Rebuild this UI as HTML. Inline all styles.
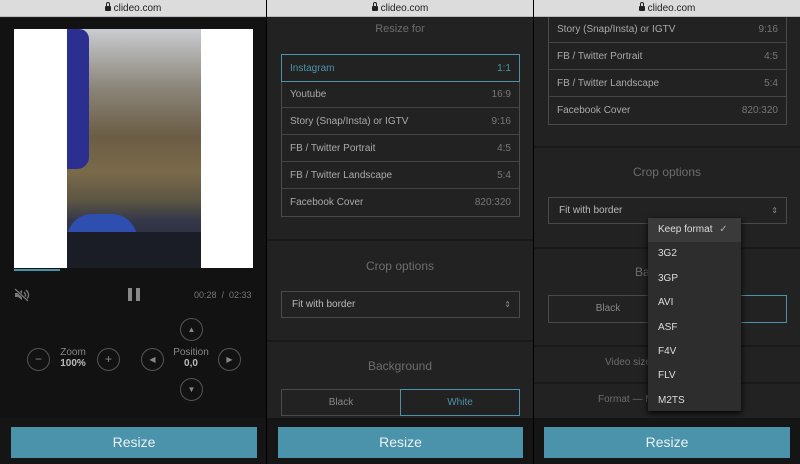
<!DOCTYPE html><html><head><style>
*{margin:0;padding:0;box-sizing:border-box}
body{width:800px;height:464px;background:#1e1e1e;font-family:"Liberation Sans",sans-serif;position:relative;overflow:hidden;color:#aaa}
.a{position:absolute}
.bar{top:0;height:17px;background:#dcdcdc;border-bottom:1px solid #bbb;font-size:10px;color:#222;text-align:center;line-height:17px}
.lock{display:inline-block;width:6px;height:5px;background:#222;margin-right:3px;border-radius:1px;position:relative}
.lock:before{content:"";position:absolute;left:1px;top:-4px;width:2px;height:3px;border:1px solid #222;border-bottom:none;border-radius:2px 2px 0 0}
.p{top:18px;height:446px;background:#222}
.foot{height:46px;top:418px;background:#151515}
.btn{background:#4b93aa;color:#e8f2f5;font-size:14px;text-align:center;line-height:31px;height:31px;top:427px}
.sep{height:2px;background:#191919}
.lbl{font-size:11px;color:#6d6d6d;text-align:center}
.list{border:1px solid #4a4a4a}
.row{height:27px;border-bottom:1px solid #444;font-size:10px;color:#aaa;display:flex;justify-content:space-between;align-items:center;padding:0 8px}
.row span:last-child{color:#777}
.sel{border:1px solid #4a4a4a;height:27px;font-size:10px;color:#bbb;padding:0 10px;line-height:25px}
.sel:after{content:"⇕";position:absolute;right:8px;font-size:8px;color:#888}
.circ{width:23px;height:23px;border:1px solid #555;border-radius:50%;color:#888;font-size:12px;text-align:center;line-height:21px}
.dd div{height:24.4px;font-size:10px;color:#ddd;padding-left:10px;line-height:24px}
</style></head><body>
<!-- panel 1 -->
<div class="a p" style="left:0;width:266px;background:#121212"></div>
<div class="a" style="left:14px;top:29px;width:239px;height:239px;background:#fff"></div>
<div class="a" style="left:67px;top:29px;width:134px;height:239px;background:linear-gradient(180deg,#c9ccd0 0%,#8a8478 25%,#6b5d45 45%,#7a6a4a 60%,#5b5543 72%,#34384a 80%,#1d2030 100%)"></div>
<div class="a" style="left:67px;top:29px;width:22px;height:140px;background:#2b2f8f;border-radius:0 10px 12px 0"></div>
<div class="a" style="left:67px;top:214px;width:70px;height:25px;background:#2e4fb0;border-radius:30px 30px 0 0"></div>
<div class="a" style="left:67px;top:232px;width:134px;height:36px;background:#1a1c26"></div>
<div class="a" style="left:14px;top:269px;width:46px;height:2px;background:#4b93aa"></div>
<svg class="a" style="left:14px;top:288px" width="16" height="14" viewBox="0 0 16 14"><path d="M1 5h3l4-3v10l-4-3H1z" fill="#777"/><path d="M10 4q3 3 0 6M12 2q5 5 0 10" stroke="#777" fill="none" stroke-width="1.3"/><path d="M1 1l13 12" stroke="#121212" stroke-width="2.5"/><path d="M1 1l13 12" stroke="#777" stroke-width="1.2"/></svg>
<div class="a" style="left:128px;top:288px;width:4px;height:13px;background:#888"></div>
<div class="a" style="left:136px;top:288px;width:4px;height:13px;background:#888"></div>
<div class="a" style="left:194px;top:290px;font-size:9px;color:#777">00:28 &nbsp;/&nbsp; 02:33</div>
<div class="a circ" style="left:27px;top:348px">−</div>
<div class="a lbl" style="left:55px;top:347px;width:36px;font-size:10px;color:#888">Zoom<br><b style="color:#bbb">100%</b></div>
<div class="a circ" style="left:97px;top:348px">+</div>
<div class="a circ" style="left:141px;top:348px;font-size:8px">◀</div>
<div class="a lbl" style="left:168px;top:347px;width:46px;font-size:10px;color:#888">Position<br><b style="color:#bbb">0,0</b></div>
<div class="a circ" style="left:218px;top:348px;font-size:8px">▶</div>
<div class="a circ" style="left:180px;top:318px;font-size:8px">▲</div>
<div class="a circ" style="left:180px;top:378px;font-size:8px">▼</div>
<div class="a foot" style="left:0;width:266px"></div>
<div class="a btn" style="left:11px;width:246px">Resize</div>
<!-- panel 2 -->
<div class="a p" style="left:267px;width:266px"></div>
<div class="a lbl" style="left:267px;top:23px;width:266px">Resize for</div>
<div class="a list" style="left:281px;top:54px;width:239px">
<div class="row" style="border:1px solid #4b93aa;margin:-1px;height:28px;color:#4b93aa"><span>Instagram</span><span style="color:#4b93aa">1:1</span></div>
<div class="row"><span>Youtube</span><span>16:9</span></div>
<div class="row"><span>Story (Snap/Insta) or IGTV</span><span>9:16</span></div>
<div class="row"><span>FB / Twitter Portrait</span><span>4:5</span></div>
<div class="row"><span>FB / Twitter Landscape</span><span>5:4</span></div>
<div class="row" style="border:none"><span>Facebook Cover</span><span>820:320</span></div></div>
<div class="a sep" style="left:267px;top:239px;width:266px"></div>
<div class="a lbl" style="left:267px;top:259px;width:266px;font-size:12px">Crop options</div>
<div class="a sel" style="left:281px;top:291px;width:239px">Fit with border</div>
<div class="a sep" style="left:267px;top:340px;width:266px"></div>
<div class="a lbl" style="left:267px;top:359px;width:266px;font-size:12px">Background</div>
<div class="a" style="left:281px;top:389px;width:120px;height:27px;border:1px solid #4a4a4a;font-size:10px;color:#888;text-align:center;line-height:25px">Black</div>
<div class="a" style="left:400px;top:389px;width:120px;height:27px;border:1px solid #4b93aa;font-size:10px;color:#4b93aa;text-align:center;line-height:25px">White</div>
<div class="a foot" style="left:267px;width:266px"></div>
<div class="a btn" style="left:278px;width:245px">Resize</div>
<!-- panel 3 -->
<div class="a p" style="left:534px;width:266px"></div>
<div class="a list" style="left:548px;top:16px;width:239px;border-top:none">
<div class="row"><span>Story (Snap/Insta) or IGTV</span><span>9:16</span></div>
<div class="row"><span>FB / Twitter Portrait</span><span>4:5</span></div>
<div class="row"><span>FB / Twitter Landscape</span><span>5:4</span></div>
<div class="row" style="border:none"><span>Facebook Cover</span><span>820:320</span></div></div>
<div class="a sep" style="left:534px;top:146px;width:266px"></div>
<div class="a lbl" style="left:534px;top:165px;width:266px;font-size:12px">Crop options</div>
<div class="a sel" style="left:548px;top:197px;width:239px">Fit with border</div>
<div class="a sep" style="left:534px;top:247px;width:266px"></div>
<div class="a lbl" style="left:534px;top:265px;width:266px;font-size:12px">Background</div>
<div class="a" style="left:548px;top:295px;width:120px;height:28px;border:1px solid #4a4a4a;font-size:10px;color:#888;text-align:center;line-height:26px">Black</div>
<div class="a" style="left:667px;top:295px;width:120px;height:28px;border:1px solid #4b93aa"></div>
<div class="a sep" style="left:534px;top:345px;width:266px"></div>
<div class="a lbl" style="left:605px;top:357px;font-size:10px;text-align:left">Video size</div>
<div class="a sep" style="left:534px;top:382px;width:266px"></div>
<div class="a lbl" style="left:598px;top:394px;font-size:10px;text-align:left">Format — MP4</div>
<div class="a dd" style="left:648px;top:218px;width:93px;height:193px;background:#2d2d2d;box-shadow:0 2px 6px #000">
<div style="background:#3a3a3a">Keep format <span style="color:#aaa;margin-left:4px">✓</span></div>
<div>3G2</div><div>3GP</div><div>AVI</div><div>ASF</div><div>F4V</div><div>FLV</div><div>M2TS</div></div>
<div class="a foot" style="left:534px;width:266px"></div>
<div class="a btn" style="left:544px;width:246px">Resize</div>
<!-- bars -->
<div class="a bar" style="left:0;width:266px"><span class="lock"></span>clideo.com</div>
<div class="a bar" style="left:267px;width:266px"><span class="lock"></span>clideo.com</div>
<div class="a bar" style="left:534px;width:266px"><span class="lock"></span>clideo.com</div>
<div class="a" style="left:266px;top:0;width:1px;height:464px;background:#000"></div>
<div class="a" style="left:533px;top:0;width:1px;height:464px;background:#000"></div>
</body></html>
